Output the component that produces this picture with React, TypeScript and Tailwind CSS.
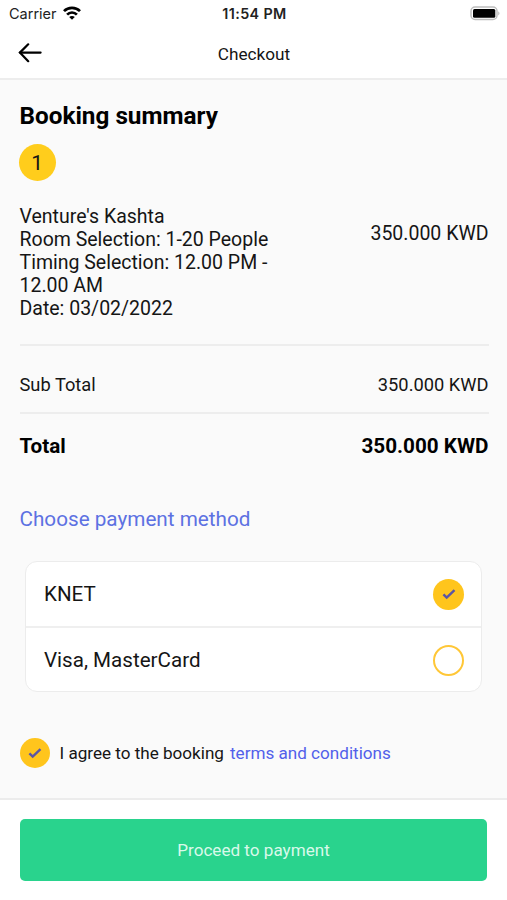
import React, { useState } from "react";

const METHODS = ["KNET", "Visa, MasterCard"];

function Tick({ className }: { className: string }) {
    return (
        <svg className={className} viewBox="0 0 14 11" fill="none">
            <path d="M1.4 5.4 L4.7 8.6 L12.5 1.2" stroke="#5b55a5" strokeWidth="2.4" />
        </svg>
    );
}

function StatusBar() {
    return (
        <div className="flex h-[27px] items-center justify-between pr-[7px] pl-[9px] font-['Inter'] text-[#222]">
            <div className="flex w-[120px] items-center gap-[6px] text-[14.5px] leading-[27px]">
                <span>Carrier</span>
                <svg className="mb-[2px] h-[14px] w-[18px] shrink-0" viewBox="0 0 18 14" fill="none" stroke="#000" strokeWidth="2.7">
                    <path d="M1 5.1 C5.3 0.7 12.7 0.7 17 5.1" />
                    <path d="M4.1 8.6 C6.8 5.8 11.2 5.8 13.9 8.6" />
                    <path d="M9 13.8 L6.2 11 C7.8 9.5 10.2 9.5 11.8 11 Z" fill="#000" stroke="none" />
                </svg>
            </div>
            <span className="pt-px text-[14.3px] font-semibold tracking-[0.4px]">11:54 PM</span>
            <div className="flex w-[120px] justify-end">
                <svg className="h-[15px] w-[31px]" viewBox="0 0 31 15" fill="none">
                    <rect x="2" y="1" width="26" height="12.5" rx="4" stroke="#bdbdbd" strokeWidth="1.5" />
                    <rect x="4" y="3" width="22.3" height="8.8" rx="1.5" fill="#000" />
                    <path d="M29.2 5.2 C31 6 31 8.6 29.2 9.4 Z" fill="#bdbdbd" />
                </svg>
            </div>
        </div>
    );
}

function App() {

    const [method, changeMethod] = useState(0);
    const [agreed, changeAgreed] = useState(true);

    return (
        <div className="flex h-[900px] w-[507px] flex-col overflow-hidden bg-[#fafafa] font-['Roboto',sans-serif] text-[#151515]">
            <header className="h-[80px] shrink-0 border-b-2 border-[#ededed] bg-white">
                <StatusBar />
                <div className="flex h-[51px] items-center justify-between pr-[17px] pl-[18px]">
                    <button className="w-[60px]">
                        <svg className="h-[20px] w-[25px]" viewBox="0 0 25 20" fill="none" stroke="#000" strokeWidth="2.2" strokeLinecap="round">
                            <path d="M2 9.6 H22.6" />
                            <path d="M10.2 1.3 L1.9 9.6 L10.2 18.2" />
                        </svg>
                    </button>
                    <h1 className="pt-[4px] text-[17.2px]">Checkout</h1>
                    <div className="w-[60px]" />
                </div>
            </header>

            <main className="flex-1 pt-[21px] pr-[18.5px] pl-[19.5px]">
                <h2 className="text-[24.3px] leading-[30px] font-bold text-black">Booking summary</h2>
                <div className="mt-[13px] -ml-[0.5px] flex size-[36.5px] items-center justify-center rounded-full bg-[#ffcd1c] pt-[2px] text-[21px]">1</div>
                <div className="mt-[24.5px] flex justify-between text-[19.5px] leading-[23px]">
                    <div className="w-[270px]">
                        <p>Venture's Kashta</p>
                        <p>Room Selection: 1-20 People</p>
                        <p>Timing Selection: 12.00 PM - 12.00 AM</p>
                        <p>Date: 03/02/2022</p>
                    </div>
                    <p className="pt-[17px]">350.000 KWD</p>
                </div>
                <div className="mt-[24px] flex h-[70px] items-center justify-between border-y-2 border-[#ededed] pt-[12px] text-[18.3px]">
                    <span>Sub Total</span>
                    <span>350.000 KWD</span>
                </div>
                <div className="flex h-[65px] items-center justify-between text-[20.7px] font-bold text-black">
                    <span>Total</span>
                    <span>350.000 KWD</span>
                </div>
                <h3 className="mt-[25px] text-[20.7px] leading-[30px] text-[#5d71e2]">Choose payment method</h3>

                <div className="mt-[27px] mr-[6.5px] ml-[5.5px] h-[131px] overflow-hidden rounded-[12px] border-[1.5px] border-[#ececec] bg-white">
                    {METHODS.map((name, i) => (
                        <button
                            key={name}
                            className={`flex w-full items-center justify-between pr-[17px] pl-[18px] text-[20.6px] ${i > 0 ? "h-[66px] border-t-2 border-[#efefef]" : "h-[64px]"}`}
                            onClick={() => changeMethod(i)}
                        >
                            <span className="pt-px">{name}</span>
                            {method === i
                                ? <span className="flex size-[31px] items-center justify-center rounded-full bg-[#ffc51c]"><Tick className="h-[11px] w-[14px]" /></span>
                                : <span className="size-[31px] rounded-full border-2 border-[#ffc737]" />}
                        </button>
                    ))}
                </div>

                <div className="mt-[46px] flex h-[30px] items-center pl-[0.5px] text-[17.1px]">
                    <button
                        className="mr-[9.5px] flex size-[30px] items-center justify-center rounded-full bg-[#ffc51c]"
                        onClick={() => changeAgreed(!agreed)}
                    >
                        {agreed && <Tick className="h-[11px] w-[14px]" />}
                    </button>
                    <span className="pt-px">I agree to the booking</span>
                    <a className="ml-[6px] pt-px text-[#5260ea]">terms and conditions</a>
                </div>
            </main>

            <footer className="h-[102px] shrink-0 border-t-2 border-[#ececec] bg-white px-[20px] pt-[19px]">
                <button className="h-[62px] w-full rounded-[5px] bg-[#29d38d] pt-[1px] text-[17.1px] text-[#d9f9ea]">Proceed to payment</button>
            </footer>
        </div>
    );
}

export default App;
